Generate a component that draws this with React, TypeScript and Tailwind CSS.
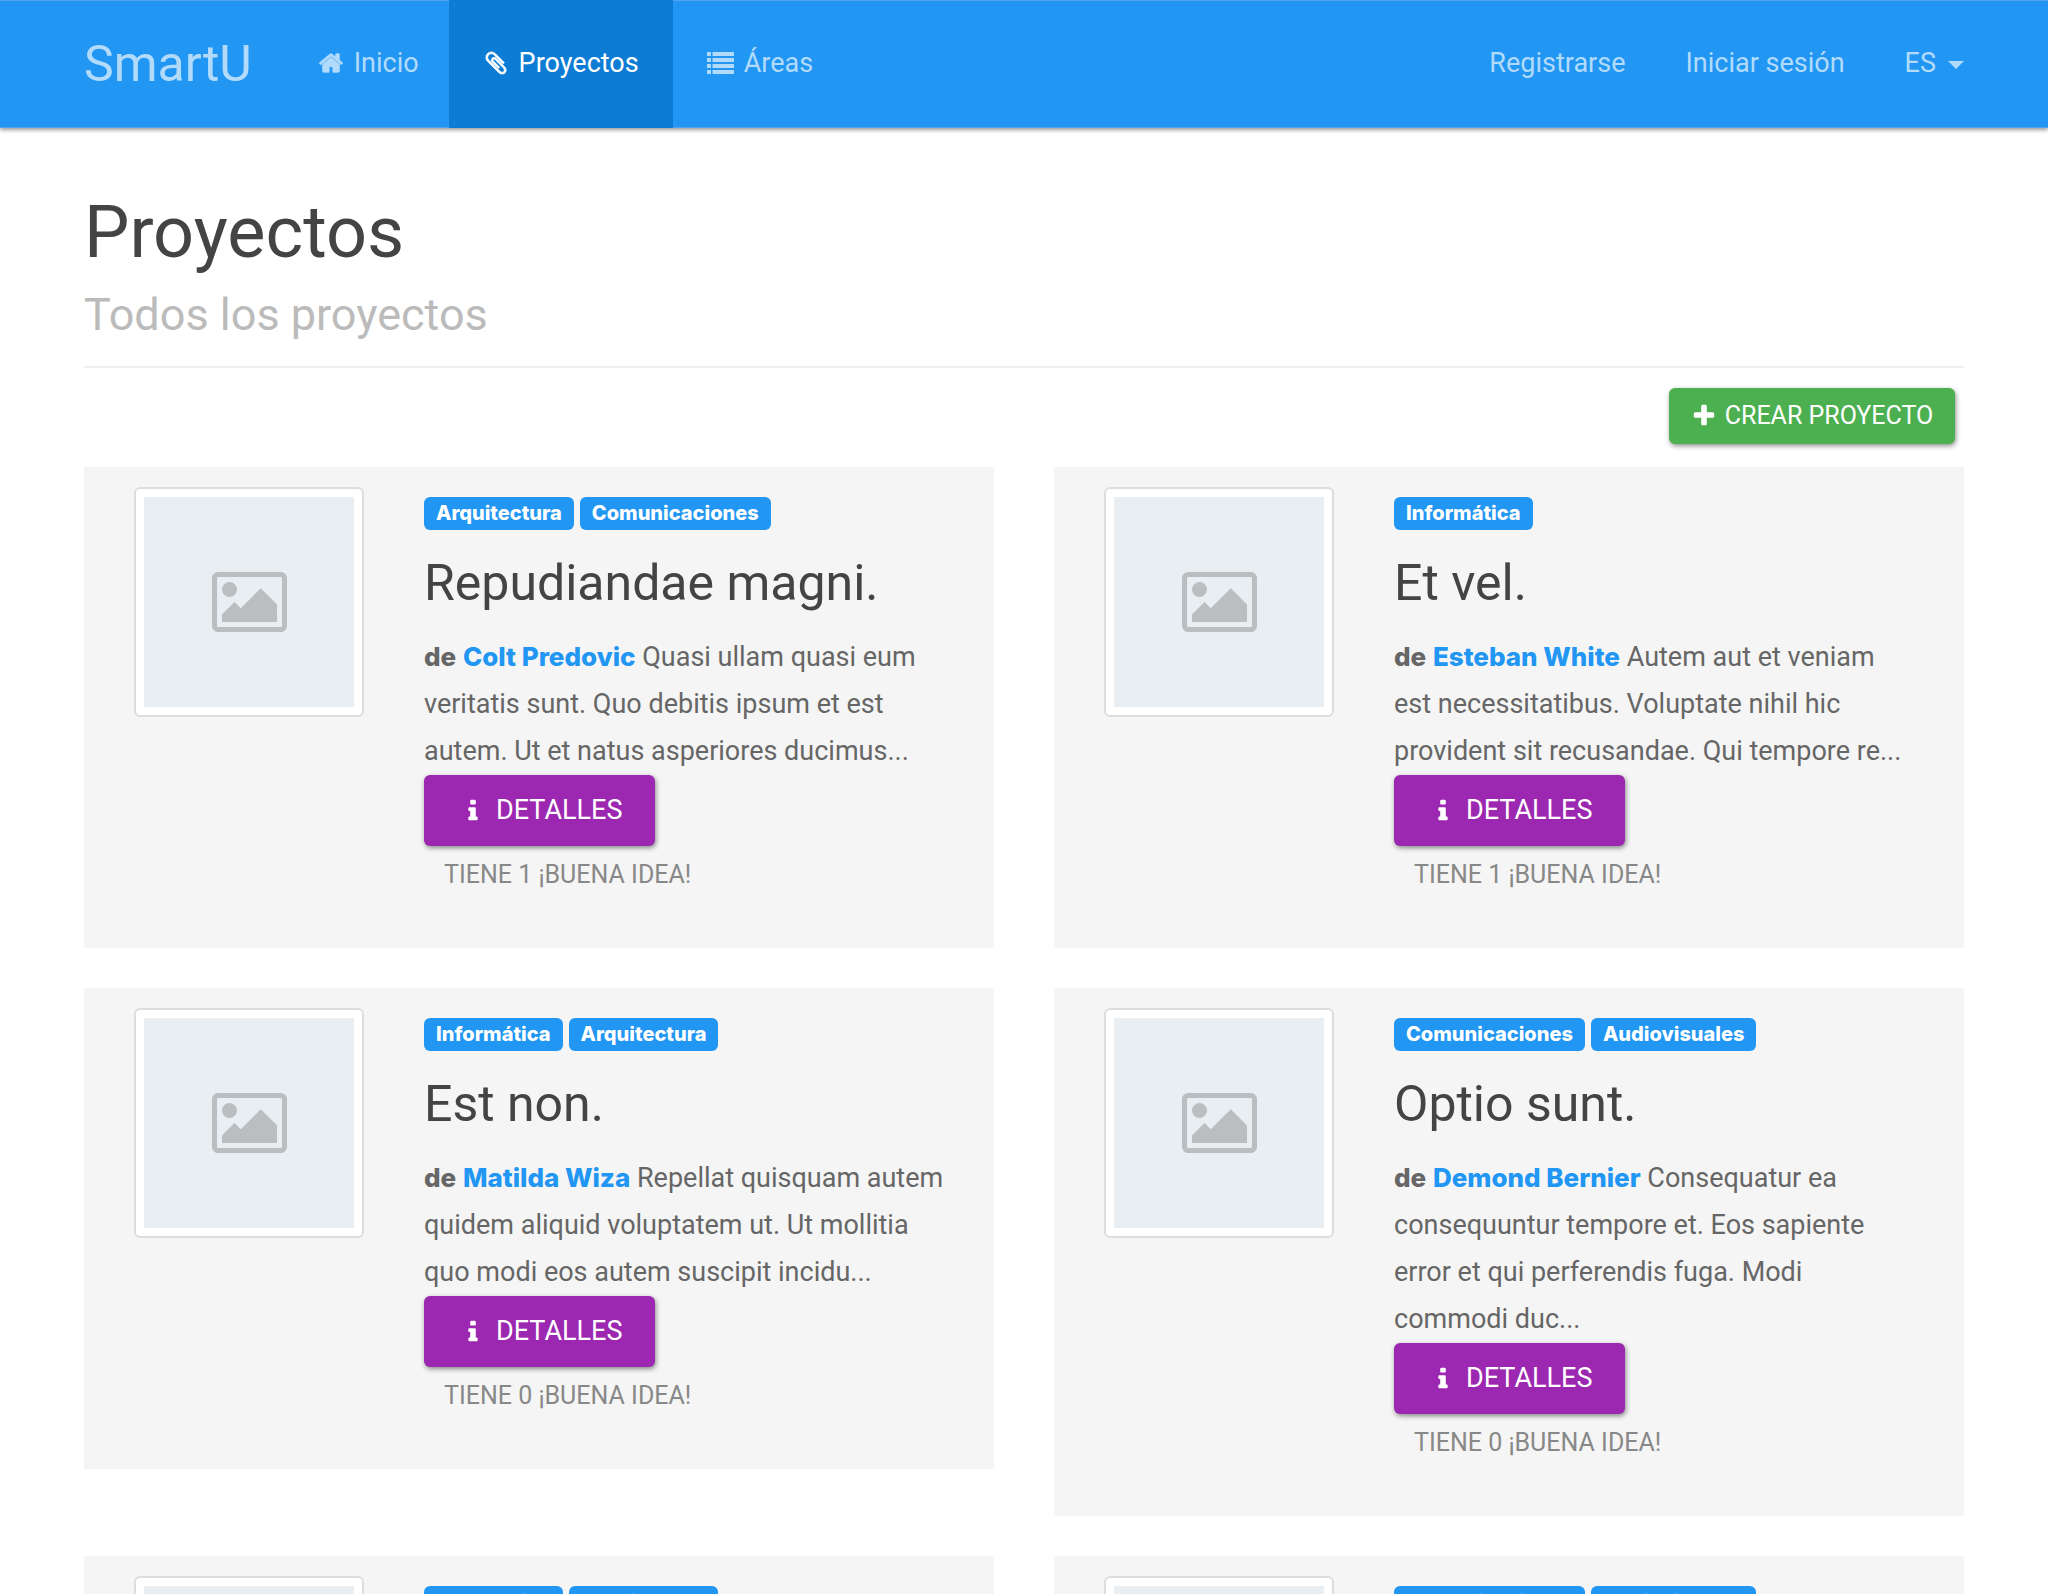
import React from "react";

function Icon({ d, className, viewBox = "0 0 1792 1792" }: { d: string; className?: string; viewBox?: string }) {
  return (
    <svg viewBox={viewBox} fill="currentColor" stroke="currentColor" aria-hidden="true" className={className}>
      <path d={d} />
    </svg>
  );
}

const HOME =
  "M1472 992v480q0 26-19 45t-45 19h-384v-384h-256v384h-384q-26 0-45-19t-19-45v-480q0-1 .5-3t.5-3l575-474 575 474q1 2 1 6zm223-69l-62 74q-8 9-21 11h-3q-13 0-21-7l-692-577-692 577q-12 8-24 7-13-2-21-11l-62-74q-8-10-7-23.5t11-21.5l719-599q32-26 76-26t76 26l244 204v-195q0-14 9-23t23-9h192q14 0 23 9t9 23v408l219 182q10 8 11 21.5t-7 23.5z";
const CLIP =
  "M1596 1385q0 117-79 196t-196 79q-135 0-235-100l-777-776q-113-115-113-271 0-159 110-270t269-111q158 0 273 113l605 606q10 10 10 22 0 16-30.5 46.5t-46.5 30.5q-13 0-23-10l-606-607q-79-77-181-77-106 0-179 75t-73 181q0 105 76 181l776 777q63 63 145 63 64 0 106-42t42-106q0-82-63-145l-581-581q-26-24-60-24-29 0-48 19t-19 48q0 32 25 59l410 410q10 10 10 22 0 16-31 47t-47 31q-12 0-22-10l-410-410q-63-61-63-149 0-82 57-139t139-57q88 0 149 63l581 581q100 98 100 235z";
const PLUS =
  "M1600 736v192q0 40-28 68t-68 28h-416v416q0 40-28 68t-68 28h-192q-40 0-68-28t-28-68v-416h-416q-40 0-68-28t-28-68v-192q0-40 28-68t68-28h416v-416q0-40 28-68t68-28h192q40 0 68 28t28 68v416h416q40 0 68 28t28 68z";
const INFO =
  "M1216 1344v128q0 26-19 45t-45 19h-512q-26 0-45-19t-19-45v-128q0-26 19-45t45-19h64v-384h-64q-26 0-45-19t-19-45v-128q0-26 19-45t45-19h384q26 0 45 19t19 45v576h64q26 0 45 19t19 45zm-128-1152v192q0 26-19 45t-45 19h-256q-26 0-45-19t-19-45v-192q0-26 19-45t45-19h256q26 0 45 19t19 45z";
const PICTURE =
  "M576 576q0 80-56 136t-136 56-136-56-56-136 56-136 136-56 136 56 56 136zm1024 384v448h-1408v-192l320-320 160 160 512-512zm96-704h-1600q-13 0-22.5 9.5t-9.5 22.5v1216q0 13 9.5 22.5t22.5 9.5h1600q13 0 22.5-9.5t9.5-22.5v-1216q0-13-9.5-22.5t-22.5-9.5zm160 32v1216q0 66-47 113t-113 47h-1600q-66 0-113-47t-47-113v-1216q0-66 47-113t113-47h1600q66 0 113 47t47 113z";

function ListIcon() {
  return (
    <svg viewBox="0 0 27 22" fill="currentColor" aria-hidden="true" className="h-[22px] w-[27px]">
      {[0, 6, 12, 18].map((y) => (
        <g key={y}>
          <rect x="0" y={y} width="4" height="4" rx="0.6" />
          <rect x="5.5" y={y} width="21.5" height="4" rx="0.6" />
        </g>
      ))}
    </svg>
  );
}

type Project = { tags: string[]; title: string; author: string; text: string; likes: number };

const projects: Project[] = [
  {
    tags: ["Arquitectura", "Comunicaciones"],
    title: "Repudiandae magni.",
    author: "Colt Predovic",
    text: "Quasi ullam quasi eum veritatis sunt. Quo debitis ipsum et est autem. Ut et natus asperiores ducimus...",
    likes: 1,
  },
  {
    tags: ["Informática"],
    title: "Et vel.",
    author: "Esteban White",
    text: "Autem aut et veniam est necessitatibus. Voluptate nihil hic provident sit recusandae. Qui tempore re...",
    likes: 1,
  },
  {
    tags: ["Informática", "Arquitectura"],
    title: "Est non.",
    author: "Matilda Wiza",
    text: "Repellat quisquam autem quidem aliquid voluptatem ut. Ut mollitia quo modi eos autem suscipit incidu...",
    likes: 0,
  },
  {
    tags: ["Comunicaciones", "Audiovisuales"],
    title: "Optio sunt.",
    author: "Demond Bernier",
    text: "Consequatur ea consequuntur tempore et. Eos sapiente error et qui perferendis fuga. Modi commodi duc...",
    likes: 0,
  },
  { tags: ["Informática", "Arquitectura"], title: "", author: "", text: "", likes: 0 },
  { tags: ["Comunicaciones", "Audiovisuales"], title: "", author: "", text: "", likes: 0 },
];

function Card({ p }: { p: Project }) {
  return (
    <article className="flex items-start gap-[60px] bg-[#f5f5f5] px-[50px] pt-5 pb-[54px]">
      <div className="shrink-0 rounded-md border-2 border-[#dddddd] bg-white p-2">
        <div className="flex size-[210px] items-center justify-center bg-[#e8eef1] text-[#babec0]">
          <Icon d={PICTURE} viewBox="-64 0 1920 1792" className="h-[70px] w-[75px]" />
        </div>
      </div>
      <div className="min-w-0 flex-1">
        <div className="mt-[10px] flex gap-[6px]">
          {p.tags.map((t) => (
            <span
              key={t}
              className="rounded-[6px] bg-[#2196f3] px-3 font-[Inter,sans-serif] text-[20px] leading-[33px] font-extrabold text-white"
            >
              {t}
            </span>
          ))}
        </div>
        {p.title && (
          <>
            <h3 className="mt-[26px] text-[50px] leading-[54px] text-[#444444]">{p.title}</h3>
            <p className="mt-6 text-[27px] leading-[47px] text-[#666666]">
              <b className="font-[Inter,sans-serif] text-[26px] leading-none font-extrabold">de</b>{" "}
              <a href="#" className="font-[Inter,sans-serif] text-[26px] leading-none font-extrabold text-[#2196f3]">
                {p.author}
              </a>{" "}
              {p.text}
            </p>
            <a
              href="#"
              className="flex h-[71px] w-[231px] items-center rounded-[6px] bg-[#9c27b0] pl-9 text-[27px] text-white uppercase shadow-[1px_2px_5px_rgba(0,0,0,0.45)]"
            >
              <Icon d={INFO} className="mr-[10px] size-[26px]" />
              Detalles
            </a>
            <p className="mt-[10px] pl-5 text-[25px] leading-[38px] text-[#888888] uppercase">Tiene {p.likes} ¡Buena idea!</p>
          </>
        )}
      </div>
    </article>
  );
}

export default function App() {
  return (
    <div className="h-screen overflow-hidden bg-white font-[Roboto,'Noto_Sans',sans-serif]">
      <nav className="flex h-[128px] items-stretch justify-between border-y border-[#50a5ec] bg-[#2196f3] px-[84px] text-[27px] text-[#b2dbfb] shadow-[0_2px_4px_rgba(0,0,0,0.4)]">
        <div className="flex">
          <a href="#" className="mr-9 flex items-center text-[50px]">
            SmartU
          </a>
          <a href="#" className="flex items-center gap-[10px] px-[30px] pb-0.5">
            <Icon d={HOME} className="size-[26px] stroke-[50]" />
            Inicio
          </a>
          <a href="#" className="-my-px flex items-center gap-[10px] bg-[#0c7cd5] px-[34px] pb-0.5 text-white">
            <Icon d={CLIP} className="size-[26px] stroke-[50]" />
            Proyectos
          </a>
          <a href="#" className="flex items-center gap-[10px] px-[34px] pb-0.5">
            <ListIcon />
            Áreas
          </a>
        </div>
        <div className="flex items-center gap-[60px] pb-0.5">
          <a href="#">Registrarse</a>
          <a href="#">Iniciar sesión</a>
          <button type="button" className="flex items-center gap-3">
            ES
            <svg viewBox="0 0 16 8" fill="currentColor" className="mt-1 h-2 w-4" aria-hidden="true">
              <path d="M0 0h16l-8 8z" />
            </svg>
          </button>
        </div>
      </nav>
      <main className="px-[84px]">
        <header className="border-b-2 border-[#eeeeee] pt-[67px] pb-[23px]">
          <h1 className="text-[72px] leading-[76px] text-[#444444]">Proyectos</h1>
          <p className="mt-4 text-[45px] leading-[56px] text-[#bbbbbb]">Todos los proyectos</p>
        </header>
        <div className="flex justify-end pt-[20px] pr-[9px] pb-[23px]">
          <button
            type="button"
            className="flex h-[56px] w-[286px] items-center justify-center gap-2 rounded-[6px] bg-[#4caf50] text-[25px] text-white uppercase shadow-[1px_2px_5px_rgba(0,0,0,0.45)]"
          >
            <Icon d={PLUS} className="size-[26px]" />
            Crear proyecto
          </button>
        </div>
        <section className="grid grid-cols-2 items-start gap-x-[60px] gap-y-10">
          {projects.map((p, i) => (
            <Card key={i} p={p} />
          ))}
        </section>
      </main>
    </div>
  );
}
